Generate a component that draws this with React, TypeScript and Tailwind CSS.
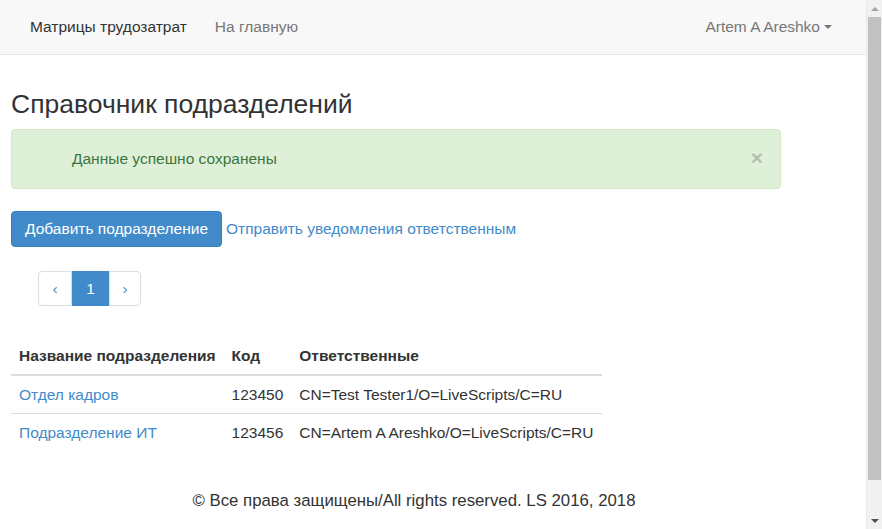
import React from 'react';

const rows = [
  { name: 'Отдел кадров', code: '123450', owner: 'CN=Test Tester1/O=LiveScripts/C=RU' },
  { name: 'Подразделение ИТ', code: '123456', owner: 'CN=Artem A Areshko/O=LiveScripts/C=RU' },
];

function Navbar() {
  return (
    <nav className="h-[55px] bg-[#f8f8f8] border-b border-[#e7e7e7] flex items-center justify-between px-[15px]">
      <div className="flex items-center">
        <a href="#" className="px-[15px] text-[#333]">Матрицы трудозатрат</a>
        <a href="#" className="px-[13px] text-[#777]">На главную</a>
      </div>
      <a href="#" className="flex items-center px-[15px] mr-[4px] text-[#777]">
        Artem A Areshko
        <span className="ml-[4px] w-0 h-0 border-x-[4px] border-x-transparent border-t-[4px] border-t-[#777]" />
      </a>
    </nav>
  );
}

function Scrollbar() {
  return (
    <div className="w-[16px] bg-[#f1f1f1] flex flex-col items-center border-l border-[#e9e9e9]">
      <div className="h-[17px] flex items-center justify-center">
        <span className="w-0 h-0 border-x-[4px] border-x-transparent border-b-[4px] border-b-[#a3a3a3]" />
      </div>
      <div className="w-[13px] h-[463px] bg-[#c1c1c1]" />
      <div className="flex-1" />
      <div className="h-[17px] flex items-center justify-center">
        <span className="w-0 h-0 border-x-[4px] border-x-transparent border-t-[4px] border-t-[#505050]" />
      </div>
    </div>
  );
}

export default function App() {
  return (
    <div className="h-[529px] flex overflow-hidden bg-white text-[15.5px] leading-[21.4px] text-[#333]" style={{ fontFamily: '"Liberation Sans", Arial, sans-serif' }}>
      <div className="flex-1 flex flex-col">
        <Navbar />

        <div className="px-[11px]">
          <h2 className="text-[26.5px] leading-[1.1] font-normal mt-[35px] mb-[10px]">Справочник подразделений</h2>

          <div className="w-[770px] h-[60px] rounded-[4px] bg-[#dff0d8] border border-[#d6e9c6] text-[#3c763d] flex items-center justify-between pl-[60px] pr-[17px]">
            <span>Данные успешно сохранены</span>
            <span className="text-[21px] font-bold leading-none text-black opacity-20 -mt-[4px]">×</span>
          </div>

          <div className="mt-[22px] flex items-center">
            <button className="h-[36px] px-[13px] rounded-[4px] bg-[#428bca] border border-[#357ebd] text-white">Добавить подразделение</button>
            <a href="#" className="ml-[4px] text-[#428bca]">Отправить уведомления ответственным</a>
          </div>

          <div className="mt-[24px] ml-[27px] flex h-[35px] w-fit">
            <a href="#" className="w-[34px] flex items-center justify-center border border-[#ddd] rounded-l-[4px] text-[#428bca]">‹</a>
            <a href="#" className="w-[37px] flex items-center justify-center bg-[#428bca] border border-[#428bca] text-white">1</a>
            <a href="#" className="w-[32px] flex items-center justify-center border border-[#ddd] rounded-r-[4px] text-[#428bca]">›</a>
          </div>

          <table className="mt-[31px] border-collapse">
            <thead>
              <tr>
                <th className="text-left font-bold px-[8px] pt-[8px] pb-[7px] border-b-2 border-[#ddd]">Название подразделения</th>
                <th className="text-left font-bold px-[8px] pt-[8px] pb-[7px] border-b-2 border-[#ddd]">Код</th>
                <th className="text-left font-bold px-[8px] pt-[8px] pb-[7px] border-b-2 border-[#ddd]">Ответственные</th>
              </tr>
            </thead>
            <tbody>
              {rows.map((r, i) => (
                <tr key={r.code}>
                  <td className={`px-[8px] py-[8px] ${i > 0 ? 'border-t border-[#ddd]' : ''}`}>
                    <a href="#" className="text-[#428bca]">{r.name}</a>
                  </td>
                  <td className={`px-[8px] py-[8px] ${i > 0 ? 'border-t border-[#ddd]' : ''}`}>{r.code}</td>
                  <td className={`px-[8px] py-[8px] ${i > 0 ? 'border-t border-[#ddd]' : ''}`}>{r.owner}</td>
                </tr>
              ))}
            </tbody>
          </table>
        </div>

        <footer className="w-[828px] text-center text-[16.8px] mt-[39px]">© Все права защищены/All rights reserved. LS 2016, 2018</footer>
      </div>
      <Scrollbar />
    </div>
  );
}
